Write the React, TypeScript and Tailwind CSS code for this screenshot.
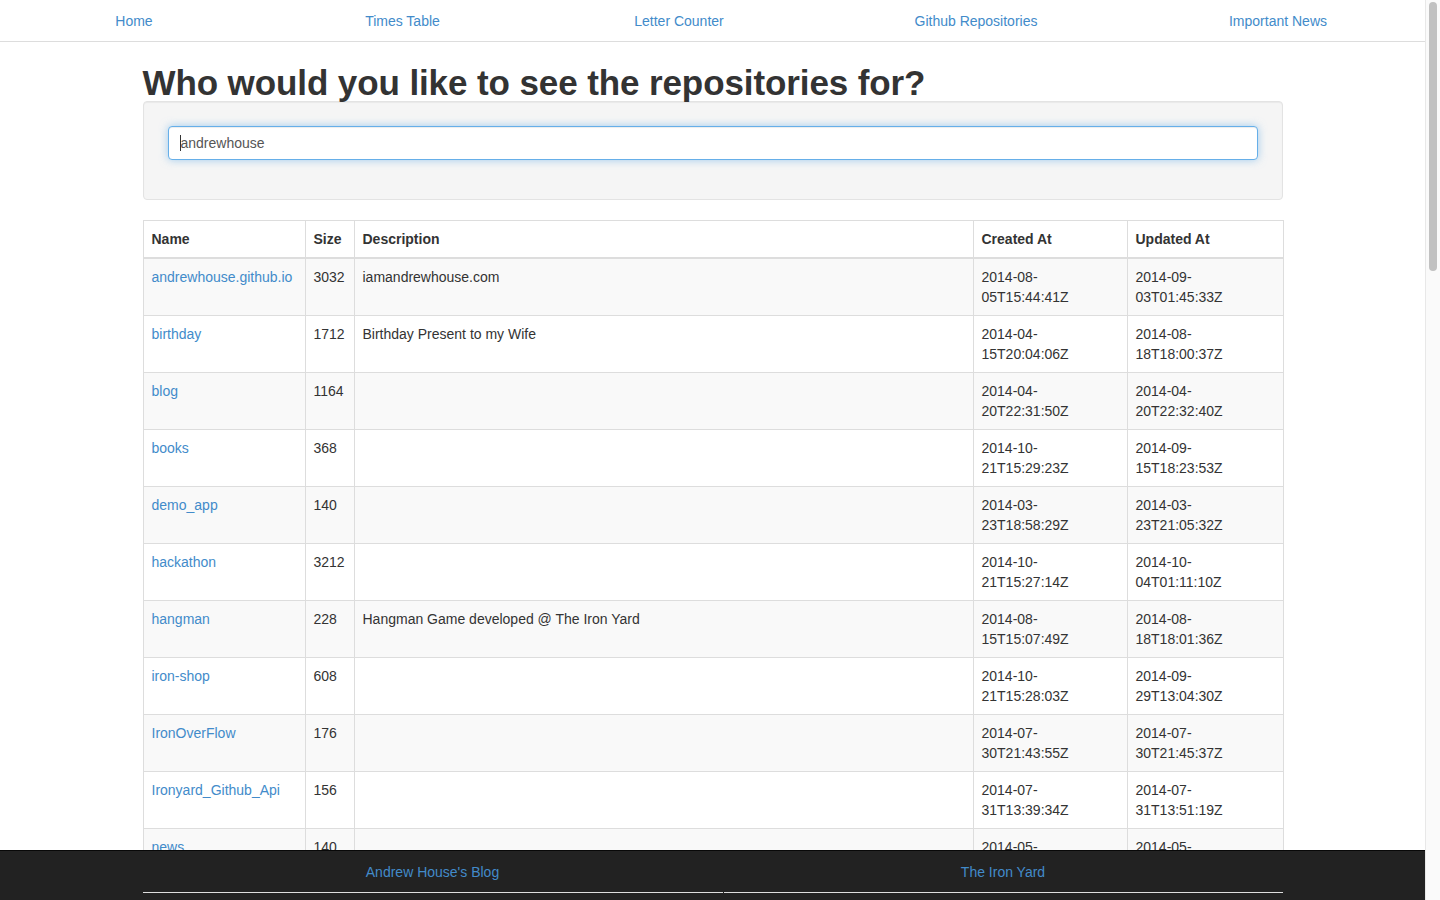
const navLinks = [
  { label: "Home", width: "w-[268px]" },
  { label: "Times Table", width: "w-[269px]" },
  { label: "Letter Counter", width: "w-[284px]" },
  { label: "Github Repositories", width: "w-[310px]" },
  { label: "Important News", width: "w-[294px]" },
];

interface Repo {
  name: string;
  size: number;
  description: string;
  created: string;
  updated: string;
}

const repos: Repo[] = [
  { name: "andrewhouse.github.io", size: 3032, description: "iamandrewhouse.com", created: "2014-08-05T15:44:41Z", updated: "2014-09-03T01:45:33Z" },
  { name: "birthday", size: 1712, description: "Birthday Present to my Wife", created: "2014-04-15T20:04:06Z", updated: "2014-08-18T18:00:37Z" },
  { name: "blog", size: 1164, description: "", created: "2014-04-20T22:31:50Z", updated: "2014-04-20T22:32:40Z" },
  { name: "books", size: 368, description: "", created: "2014-10-21T15:29:23Z", updated: "2014-09-15T18:23:53Z" },
  { name: "demo_app", size: 140, description: "", created: "2014-03-23T18:58:29Z", updated: "2014-03-23T21:05:32Z" },
  { name: "hackathon", size: 3212, description: "", created: "2014-10-21T15:27:14Z", updated: "2014-10-04T01:11:10Z" },
  { name: "hangman", size: 228, description: "Hangman Game developed @ The Iron Yard", created: "2014-08-15T15:07:49Z", updated: "2014-08-18T18:01:36Z" },
  { name: "iron-shop", size: 608, description: "", created: "2014-10-21T15:28:03Z", updated: "2014-09-29T13:04:30Z" },
  { name: "IronOverFlow", size: 176, description: "", created: "2014-07-30T21:43:55Z", updated: "2014-07-30T21:45:37Z" },
  { name: "Ironyard_Github_Api", size: 156, description: "", created: "2014-07-31T13:39:34Z", updated: "2014-07-31T13:51:19Z" },
  { name: "news", size: 140, description: "", created: "2014-05-02T14:11:52Z", updated: "2014-05-02T14:12:40Z" },
  { name: "portfolio", size: 412, description: "", created: "2014-06-11T19:20:05Z", updated: "2014-06-12T02:33:18Z" },
];

function splitDate(value: string) {
  const [first, ...rest] = value.split("-");
  const head = `${first}-${rest[0]}-`;
  return [head, rest.slice(1).join("-")];
}

function DateCell({ value }: { value: string }) {
  const [head, tail] = splitDate(value);
  return (
    <td className="border border-[#ddd] px-2 py-2 align-top">
      {head}
      <br />
      {tail}
    </td>
  );
}

export default function App() {
  return (
    <div
      className="flex h-[900px] w-full overflow-hidden bg-white text-[14px] leading-5 text-[#333]"
      style={{ fontFamily: '"Liberation Sans", Arial, sans-serif' }}
    >
      <div className="flex min-w-0 flex-1 flex-col">
        <nav className="flex h-[42px] shrink-0 border-b border-[#ddd]">
          {navLinks.map((link) => (
            <div key={link.label} className={`flex items-center justify-center ${link.width}`}>
              <a href="#" className="text-[#428bca]">
                {link.label}
              </a>
            </div>
          ))}
        </nav>

        <main className="min-h-0 flex-1 overflow-hidden">
          <div className="mx-auto w-[1140px]">
            <h1 className="mt-[22px] text-[35px] font-bold leading-[37px] tracking-[-0.1px] text-[#333]">
              Who would you like to see the repositories for?
            </h1>

            <div className="rounded-[4px] border border-[#e3e3e3] bg-[#f5f5f5] p-6 shadow-[inset_0_1px_1px_rgba(0,0,0,0.05)]">
              <div className="mb-[15px] flex h-[34px] items-center rounded-[4px] border border-[#66afe9] bg-white px-3 text-[#555] shadow-[inset_0_1px_1px_rgba(0,0,0,0.075),0_0_8px_rgba(102,175,233,0.6)]">
                <span className="-ml-px inline-block h-[16px] w-px bg-[#333]" />
                andrewhouse
              </div>
            </div>

            <table className="mt-5 w-[1140px] table-fixed border-collapse border border-[#ddd]">
              <colgroup>
                <col className="w-[162px]" />
                <col className="w-[49px]" />
                <col className="w-[619px]" />
                <col className="w-[154px]" />
                <col className="w-[156px]" />
              </colgroup>
              <thead>
                <tr>
                  {["Name", "Size", "Description", "Created At", "Updated At"].map((heading) => (
                    <th
                      key={heading}
                      className="border border-b-2 border-[#ddd] px-2 py-2 text-left font-bold"
                    >
                      {heading}
                    </th>
                  ))}
                </tr>
              </thead>
              <tbody>
                {repos.map((repo, index) => (
                  <tr key={repo.name} className={index % 2 === 0 ? "bg-[#f9f9f9]" : "bg-white"}>
                    <td className="border border-[#ddd] px-2 py-2 align-top">
                      <a href="#" className="text-[#428bca]">
                        {repo.name}
                      </a>
                    </td>
                    <td className="border border-[#ddd] px-2 py-2 align-top">{repo.size}</td>
                    <td className="border border-[#ddd] px-2 py-2 align-top">{repo.description}</td>
                    <DateCell value={repo.created} />
                    <DateCell value={repo.updated} />
                  </tr>
                ))}
              </tbody>
            </table>
          </div>
        </main>

        <footer className="h-[50px] shrink-0 border-t border-[#080808] bg-[#222]">
          <div className="mx-auto flex w-[1140px] gap-px">
            <div className="w-[580px] border-b border-[#ddd] pb-[10px] pt-[11px] text-center">
              <a href="#" className="text-[#428bca]">
                Andrew House's Blog
              </a>
            </div>
            <div className="w-[559px] border-b border-[#ddd] pb-[10px] pt-[11px] text-center">
              <a href="#" className="text-[#428bca]">
                The Iron Yard
              </a>
            </div>
          </div>
        </footer>
      </div>

      <div className="w-[15px] shrink-0 border-l border-[#e8e8e8] bg-[#fafafa] pl-[3px] pt-[2px]">
        <div className="h-[269px] w-[8px] rounded-full bg-[#c1c1c1]" />
      </div>
    </div>
  );
}
